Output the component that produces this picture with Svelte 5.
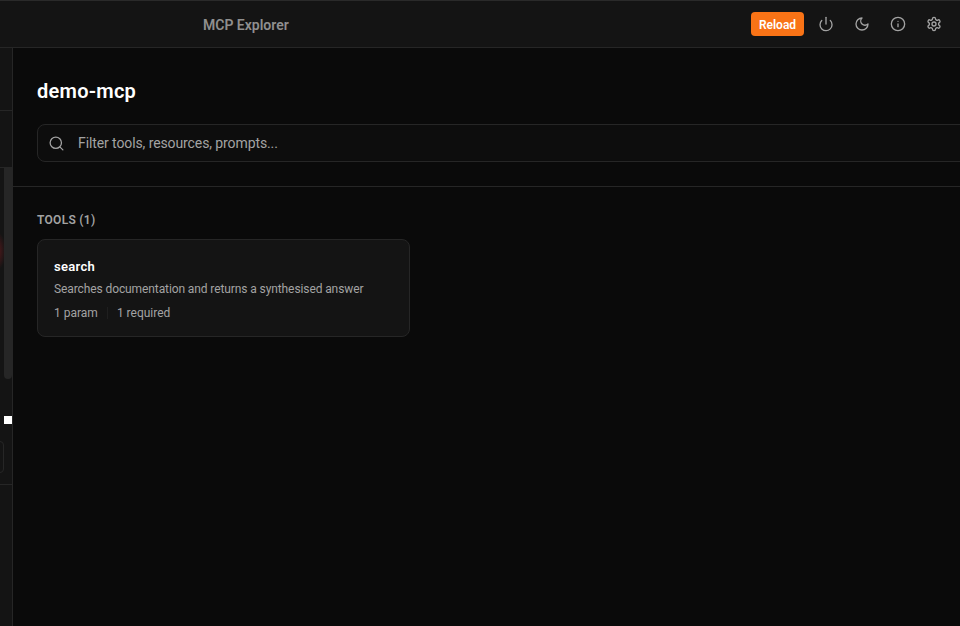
<script lang="ts">
	const tools = [
		{
			name: 'search',
			description: 'Searches documentation and returns a synthesised answer',
			params: '1 param',
			required: '1 required'
		}
	];
</script>

<div class="app">
	<header class="topbar">
		<div class="title">MCP Explorer</div>
		<div class="actions">
			<button class="reload">Reload</button>
			<button class="icon" aria-label="Disconnect">
				<svg viewBox="0 0 24 24"><path d="M12 2v10" /><path d="M18.4 6.6a9 9 0 1 1-12.77.04" /></svg>
			</button>
			<button class="icon" aria-label="Theme">
				<svg viewBox="0 0 24 24"><path d="M12 3a6 6 0 0 0 9 9 9 9 0 1 1-9-9Z" /></svg>
			</button>
			<button class="icon" aria-label="About">
				<svg viewBox="0 0 24 24"><circle cx="12" cy="12" r="10" /><path d="M12 16v-4" /><path d="M12 8h.01" /></svg>
			</button>
			<button class="icon" aria-label="Settings">
				<svg viewBox="0 0 24 24">
					<path d="M12.22 2h-.44a2 2 0 0 0-2 2v.18a2 2 0 0 1-1 1.73l-.43.25a2 2 0 0 1-2 0l-.15-.08a2 2 0 0 0-2.73.73l-.22.38a2 2 0 0 0 .73 2.73l.15.1a2 2 0 0 1 1 1.72v.51a2 2 0 0 1-1 1.74l-.15.09a2 2 0 0 0-.73 2.73l.22.38a2 2 0 0 0 2.73.73l.15-.08a2 2 0 0 1 2 0l.43.25a2 2 0 0 1 1 1.73V20a2 2 0 0 0 2 2h.44a2 2 0 0 0 2-2v-.18a2 2 0 0 1 1-1.73l.43-.25a2 2 0 0 1 2 0l.15.08a2 2 0 0 0 2.73-.73l.22-.39a2 2 0 0 0-.73-2.73l-.15-.08a2 2 0 0 1-1-1.74v-.5a2 2 0 0 1 1-1.74l.15-.09a2 2 0 0 0 .73-2.73l-.22-.38a2 2 0 0 0-2.73-.73l-.15.08a2 2 0 0 1-2 0l-.43-.25a2 2 0 0 1-1-1.73V4a2 2 0 0 0-2-2z" />
					<circle cx="12" cy="12" r="3" />
				</svg>
			</button>
		</div>
	</header>

	<div class="body">
		<aside class="sidebar">
			<div class="side-head"></div>
			<div class="side-filter"></div>
			<div class="side-list">
				<div class="glow"></div>
				<div class="thumb"></div>
				<div class="handle"></div>
				<div class="stub"></div>
			</div>
			<div class="side-foot"></div>
		</aside>

		<main class="main">
			<section class="intro">
				<h1>demo-mcp</h1>
				<div class="filter">
					<svg viewBox="0 0 24 24"><circle cx="11" cy="11" r="8" /><path d="m21 21-4.3-4.3" /></svg>
					<span>Filter tools, resources, prompts...</span>
				</div>
			</section>

			<section class="listing">
				<h2>TOOLS ({tools.length})</h2>
				{#each tools as tool}
					<article class="card">
						<h3>{tool.name}</h3>
						<p>{tool.description}</p>
						<div class="meta">
							<span>{tool.params}</span>
							<i></i>
							<span>{tool.required}</span>
						</div>
					</article>
				{/each}
			</section>
		</main>
	</div>
</div>

<style>
	:global(body) {
		margin: 0;
		background: #0a0a0a;
		overflow: hidden;
	}
	.app {
		width: 960px;
		height: 626px;
		display: flex;
		flex-direction: column;
		overflow: hidden;
		font-family: Roboto, 'Noto Sans', sans-serif;
		background: #0a0a0a;
	}
	.topbar {
		flex: none;
		height: 46px;
		display: flex;
		align-items: center;
		justify-content: space-between;
		padding-left: 203px;
		padding-right: 8px;
		background: #141414;
		border-top: 1px solid #2a2a2a;
		border-bottom: 1px solid #262626;
	}
	.title {
		padding-top: 1px;
		font-size: 14px;
		font-weight: 600;
		color: #8f8f8f;
	}
	.actions {
		display: flex;
		align-items: center;
	}
	.reload {
		width: 53px;
		height: 24px;
		margin-right: 4px;
		padding: 1px 0 0;
		border: 0;
		border-radius: 4px;
		background: #f97316;
		color: #fff;
		font: 600 12px Roboto, sans-serif;
	}
	.icon {
		width: 36px;
		height: 36px;
		padding: 0;
		display: flex;
		align-items: center;
		justify-content: center;
		border: 0;
		background: none;
	}
	.icon svg {
		width: 16px;
		height: 16px;
		fill: none;
		stroke: #a3a3a3;
		stroke-width: 2;
		stroke-linecap: round;
		stroke-linejoin: round;
	}
	.filter svg {
		width: 17px;
		height: 17px;
		fill: none;
		stroke: #a3a3a3;
		stroke-width: 1.8;
		stroke-linecap: round;
		stroke-linejoin: round;
	}
	.body {
		flex: 1;
		min-height: 0;
		display: flex;
	}
	.sidebar {
		flex: none;
		width: 12px;
		display: flex;
		flex-direction: column;
		background: #141414;
		border-right: 1px solid #262626;
	}
	.side-head {
		flex: none;
		height: 62px;
		border-bottom: 1px solid #262626;
	}
	.side-filter {
		flex: none;
		height: 56px;
		border-bottom: 1px solid #262626;
	}
	.side-list {
		flex: none;
		position: relative;
		height: 316px;
		border-bottom: 1px solid #262626;
	}
	.glow {
		position: absolute;
		left: -14px;
		top: 63px;
		width: 20px;
		height: 40px;
		background: radial-gradient(closest-side, rgba(140, 30, 35, 0.6), transparent);
	}
	.thumb {
		position: absolute;
		left: 4px;
		top: 0;
		width: 8px;
		height: 211px;
		border-radius: 0 0 4px 4px;
		background: #262626;
	}
	.handle {
		position: absolute;
		left: 4px;
		top: 248px;
		width: 8px;
		height: 8px;
		background: #fff;
	}
	.stub {
		position: absolute;
		right: 8px;
		top: 273px;
		width: 20px;
		height: 32px;
		box-sizing: border-box;
		border: 1px solid #262626;
		border-radius: 4px;
	}
	.side-foot {
		flex: 1;
	}
	.main {
		flex: none;
		width: 1000px;
	}
	.intro {
		height: 139px;
		box-sizing: border-box;
		padding: 29px 24px 0;
		border-bottom: 1px solid #262626;
	}
	h1 {
		margin: 0 0 19px;
		font-size: 20px;
		line-height: 28px;
		font-weight: 600;
		letter-spacing: 0.25px;
		color: #fff;
	}
	.filter {
		height: 36px;
		display: flex;
		align-items: center;
		gap: 13px;
		padding-left: 10px;
		border: 1px solid #262626;
		border-radius: 8px;
		background: #0d0d0d;
		font-size: 14px;
		letter-spacing: -0.1px;
		color: #a3a3a3;
	}
	.listing {
		padding: 24px 24px 0;
	}
	h2 {
		margin: 0 0 10px;
		font-size: 12px;
		line-height: 18px;
		font-weight: 600;
		letter-spacing: 0.3px;
		color: #a3a3a3;
	}
	.card {
		width: 373px;
		height: 98px;
		box-sizing: border-box;
		padding: 17px 16px 16px;
		border: 1px solid #262626;
		border-radius: 8px;
		background: #141414;
	}
	h3 {
		margin: 0 0 3px;
		font-size: 13px;
		line-height: 20px;
		font-weight: 600;
		letter-spacing: 0.3px;
		color: #fff;
	}
	.card p {
		margin: 0 0 6px;
		font-size: 12px;
		line-height: 18px;
		letter-spacing: -0.1px;
		color: #a3a3a3;
	}
	.meta {
		display: flex;
		align-items: center;
		gap: 9px;
		font-size: 12px;
		line-height: 18px;
		color: #a3a3a3;
	}
	.meta i {
		width: 1px;
		height: 12px;
		background: #1f1f1f;
	}
</style>
